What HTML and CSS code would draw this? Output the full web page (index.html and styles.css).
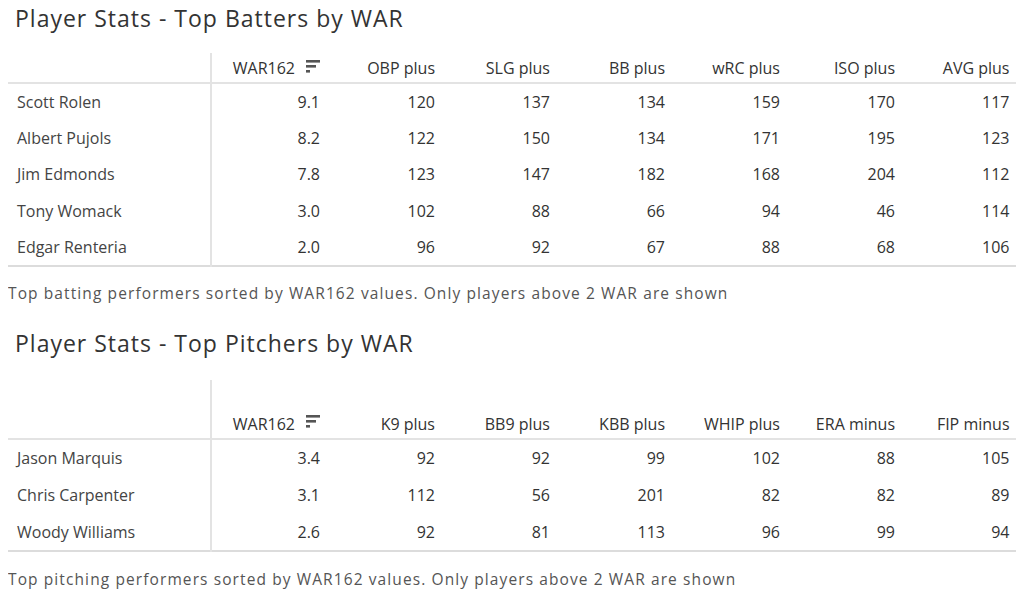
FILE: index.html
```html
<!DOCTYPE html>
<html lang="en">
<head>
<meta charset="utf-8">
<title>Player Stats</title>
<link rel="stylesheet" href="styles.css">
</head>
<body>
<section class="panel">
  <h2 class="title">Player Stats - Top Batters by WAR</h2>
  <table class="stats">
    <colgroup><col class="c-name"><col span="7" class="c-num"></colgroup>
    <thead>
      <tr class="head head-short">
        <th class="corner"></th>
        <th class="num"><span class="sorted">WAR162<svg class="sort-icon" viewBox="0 0 14 13" width="14" height="13"><rect x="0" y="0" width="14" height="2.6"/><rect x="0" y="5" width="10" height="2.6"/><rect x="0" y="10" width="4" height="2.6"/></svg></span></th>
        <th class="num">OBP plus</th>
        <th class="num">SLG plus</th>
        <th class="num">BB plus</th>
        <th class="num">wRC plus</th>
        <th class="num">ISO plus</th>
        <th class="num">AVG plus</th>
      </tr>
    </thead>
    <tbody>
      <tr><th class="name">Scott Rolen</th><td>9.1</td><td>120</td><td>137</td><td>134</td><td>159</td><td>170</td><td>117</td></tr>
      <tr><th class="name">Albert Pujols</th><td>8.2</td><td>122</td><td>150</td><td>134</td><td>171</td><td>195</td><td>123</td></tr>
      <tr><th class="name">Jim Edmonds</th><td>7.8</td><td>123</td><td>147</td><td>182</td><td>168</td><td>204</td><td>112</td></tr>
      <tr><th class="name">Tony Womack</th><td>3.0</td><td>102</td><td>88</td><td>66</td><td>94</td><td>46</td><td>114</td></tr>
      <tr><th class="name">Edgar Renteria</th><td>2.0</td><td>96</td><td>92</td><td>67</td><td>88</td><td>68</td><td>106</td></tr>
    </tbody>
  </table>
  <p class="caption">Top batting performers sorted by WAR162 values. Only players above 2 WAR are shown</p>
</section>

<section class="panel panel-second">
  <h2 class="title">Player Stats - Top Pitchers by WAR</h2>
  <table class="stats stats-tall">
    <colgroup><col class="c-name"><col span="7" class="c-num"></colgroup>
    <thead>
      <tr class="head head-tall">
        <th class="corner"></th>
        <th class="num"><span class="sorted">WAR162<svg class="sort-icon" viewBox="0 0 14 13" width="14" height="13"><rect x="0" y="0" width="14" height="2.6"/><rect x="0" y="5" width="10" height="2.6"/><rect x="0" y="10" width="4" height="2.6"/></svg></span></th>
        <th class="num">K9 plus</th>
        <th class="num">BB9 plus</th>
        <th class="num">KBB plus</th>
        <th class="num">WHIP plus</th>
        <th class="num">ERA minus</th>
        <th class="num">FIP minus</th>
      </tr>
    </thead>
    <tbody>
      <tr><th class="name">Jason Marquis</th><td>3.4</td><td>92</td><td>92</td><td>99</td><td>102</td><td>88</td><td>105</td></tr>
      <tr><th class="name">Chris Carpenter</th><td>3.1</td><td>112</td><td>56</td><td>201</td><td>82</td><td>82</td><td>89</td></tr>
      <tr><th class="name">Woody Williams</th><td>2.6</td><td>92</td><td>81</td><td>113</td><td>96</td><td>99</td><td>94</td></tr>
    </tbody>
  </table>
  <p class="caption">Top pitching performers sorted by WAR162 values. Only players above 2 WAR are shown</p>
</section>
</body>
</html>
```

FILE: styles.css
```css
html, body {
  background: #ffffff;
}

body {
  margin: 0 8px;
  font-family: "Open Sans", "Noto Sans", sans-serif;
  color: #333333;
}

.panel {
  display: flex;
  flex-direction: column;
  align-items: flex-start;
}

.panel-second {
  margin-top: 20px;
}

.title {
  margin: 0;
  padding-left: 7px;
  font-family: "Open Sans", "Noto Sans", sans-serif;
  font-weight: 400;
  font-size: 23px;
  line-height: 36px;
  letter-spacing: 1px;
  color: #333333;
}

.stats {
  margin-top: 17px;
  border-collapse: collapse;
  table-layout: fixed;
  width: 1008px;
  font-size: 16px;
  color: #333333;
  border-right: 1px solid #d4d4d4;
  border-bottom: 2px solid #dcdcdc;
}

.stats-tall {
  margin-top: 19px;
}

.c-name {
  width: 203px;
}

.c-num {
  width: 115px;
}

.stats th,
.stats td {
  padding: 0 6px 0 0;
  font-weight: 400;
  white-space: nowrap;
}

.head th {
  vertical-align: bottom;
  text-align: right;
  line-height: 20px;
  padding-bottom: 4px;
  border-bottom: 2px solid #e3e3e3;
  color: #333333;
}

.head-short th {
  height: 25px;
}

.head-tall th {
  height: 54px;
}

.stats .corner,
.stats .name {
  border-right: 2px solid #e3e3e3;
}

.name {
  text-align: left;
  padding-left: 9px !important;
  color: #444444;
}

.stats td {
  text-align: right;
}

.stats tbody tr {
  height: 36.5px;
}

.stats-tall tbody tr {
  height: 37.6px;
}

.sorted {
  display: inline-flex;
  align-items: center;
  gap: 11px;
}

.sort-icon {
  fill: #555555;
  margin-top: -4px;
}

.caption {
  margin: 14px 0 0 0;
  font-family: "Open Sans", "Noto Sans", sans-serif;
  font-size: 15.5px;
  line-height: 24px;
  letter-spacing: 1.1px;
  color: #555555;
}

.panel-second .caption {
  margin-top: 15px;
}
```
